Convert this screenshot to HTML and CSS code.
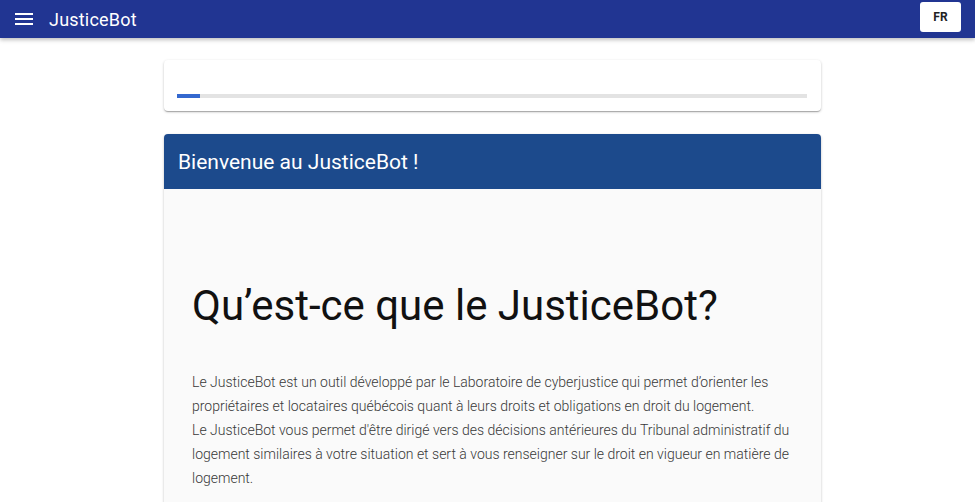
FILE: index.html
```html
<!DOCTYPE html>
<html lang="fr">
<head>
<meta charset="utf-8">
<title>JusticeBot</title>
<link rel="stylesheet" href="styles.css">
</head>
<body>
<header class="appbar">
  <div class="appbar-left">
    <svg class="menu-icon" viewBox="0 0 24 24" width="24" height="24"><path d="M3 18h18v-2H3v2zm0-5h18v-2H3v2zm0-7v2h18V6H3z" fill="#fff"/></svg>
    <span class="app-title">JusticeBot</span>
  </div>
  <button class="lang-btn">FR</button>
</header>
<main class="page">
  <div class="column">
    <section class="card progress-card">
      <div class="progress-track"><div class="progress-fill" style="width:3.6%"></div></div>
    </section>
    <section class="card content-card">
      <div class="card-header">Bienvenue au JusticeBot !</div>
      <div class="card-body">
        <h1 class="headline">Qu’est-ce que le JusticeBot?</h1>
        <p class="intro">Le JusticeBot est un outil développé par le Laboratoire de cyberjustice qui permet d’orienter les propriétaires et locataires québécois quant à leurs droits et obligations en droit du logement.<br>Le JusticeBot vous permet d'être dirigé vers des décisions antérieures du Tribunal administratif du logement similaires à votre situation et sert à vous renseigner sur le droit en vigueur en matière de logement.</p>
      </div>
    </section>
  </div>
</main>
</body>
</html>
```
FILE: styles.css
```css
* { box-sizing: border-box; }
html, body { margin: 0; padding: 0; }
body {
  font-family: Roboto, "Noto Sans", "Liberation Sans", sans-serif;
  background: #fff;
  overflow: hidden;
}
.appbar {
  height: 38px;
  background: #213592;
  display: flex;
  align-items: center;
  justify-content: space-between;
  padding: 0 14px 0 12px;
  box-shadow: 0 2px 4px rgba(0,0,0,0.25);
  position: relative;
  z-index: 2;
}
.appbar-left { display: flex; align-items: center; }
.menu-icon { display: block; margin-right: 13px; }
.app-title { color: #fff; font-size: 18px; font-weight: 400; letter-spacing: 0.2px; }
.lang-btn {
  background: #fff;
  border: none;
  border-radius: 3px;
  width: 41px;
  height: 30px;
  font-family: Roboto, "Liberation Sans", sans-serif;
  font-weight: 700;
  font-size: 12px;
  color: #222;
  margin-top: -4px;
  padding: 0;
}
.page {
  display: flex;
  justify-content: center;
  padding: 22px 0 0 10px;
}
.column {
  width: 657px;
  display: flex;
  flex-direction: column;
  gap: 23px;
}
.card {
  background: #fff;
  border-radius: 4px;
  box-shadow: 0 1px 3px rgba(0,0,0,0.2), 0 1px 1px rgba(0,0,0,0.14), 0 2px 1px -1px rgba(0,0,0,0.12);
}
.progress-card {
  height: 51px;
  padding: 34px 14px 0 13px;
}
.progress-track {
  height: 4px;
  background: #e3e3e3;
}
.progress-fill {
  height: 100%;
  background: #3468cf;
}
.content-card { overflow: hidden; background: #fafafa; }
.card-header {
  height: 55px;
  background: #1c4a8c;
  color: #fff;
  font-size: 21px;
  display: flex;
  align-items: center;
  padding-left: 14px;
}
.card-body {
  padding: 90px 28px 20px 28px;
}
.headline {
  margin: 0;
  font-size: 42px;
  font-weight: 400;
  color: #111;
  line-height: 54px;
}
.intro {
  margin: 37px 0 0;
  font-size: 14px;
  font-weight: 300;
  line-height: 24px;
  color: #383838;
}
```
